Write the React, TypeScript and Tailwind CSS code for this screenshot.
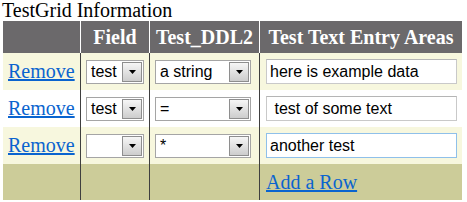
import React from 'react'

const serif = "font-['Liberation_Serif','Times_New_Roman',serif]"
const sans = "font-['Liberation_Sans',Arial,sans-serif]"

function FakeSelect({ value, width }: { value: string; width: string }) {
  return (
    <div className={`flex h-[24px] items-center border border-[#a5a5a5] bg-white p-[1px] ${width}`}>
      <span className={`flex-1 overflow-hidden whitespace-nowrap pl-[3px] text-[16px] leading-[20px] text-black ${sans}`}>
        {value}
      </span>
      <span className="flex h-full w-[20px] items-center justify-center border border-[#8e8e8e] bg-gradient-to-b from-[#f6f6f6] to-[#cdcdcd]">
        <svg width="7" height="4" viewBox="0 0 7 4">
          <path d="M0 0h7L3.5 4z" fill="#000" />
        </svg>
      </span>
    </div>
  )
}

function TextBox({ value, focused }: { value: string; focused?: boolean }) {
  return (
    <input
      readOnly
      value={value}
      className={`h-[25px] w-[191px] border bg-white pl-[3px] text-[16px] text-black outline-none ${sans} ${
        focused ? 'border-[#8fc0ea]' : 'border-[#c9c9c9] border-t-[#b5b5b5]'
      }`}
    />
  )
}

const rows = [
  { field: 'test', ddl: 'a string', text: 'here is example data', bg: 'bg-[#f7f7de]' },
  { field: 'test', ddl: '=', text: ' test of some text', bg: 'bg-white' },
  { field: '', ddl: '*', text: 'another test', bg: 'bg-[#f7f7de]', focused: true },
]

export default function App() {
  return (
    <div className={`w-[467px] h-[202px] bg-white ${serif}`}>
      <div className="h-[21px] pl-[2px] text-[20px] leading-[21px] text-black">TestGrid Information</div>
      <div className="ml-[3px] w-[459px]">
        <div className="flex h-[32px] bg-[#6b696b] text-[20px] font-bold text-white">
          <div className="w-[78px] border-r border-white" />
          <div className="flex w-[69px] items-center justify-center border-r border-white">Field</div>
          <div className="flex w-[110px] items-center justify-center border-r border-white">Test_DDL2</div>
          <div className="flex flex-1 items-center justify-center">Test Text Entry Areas</div>
        </div>
        {rows.map((r, i) => (
          <div key={i} className={`flex h-[37px] ${r.bg} text-[20px]`}>
            <div className="flex w-[78px] items-center border-r border-[#3f3f3f] pl-[5px] pb-[2px]">
              <a href="#" className="text-[#0a64cf] underline">Remove</a>
            </div>
            <div className="flex w-[69px] items-center border-r border-[#3f3f3f] pl-[5px]">
              <FakeSelect value={r.field} width="w-[58px]" />
            </div>
            <div className="flex w-[110px] items-center border-r border-[#3f3f3f] pl-[5px]">
              <FakeSelect value={r.ddl} width="w-[96px]" />
            </div>
            <div className="flex flex-1 items-center pl-[6px]">
              <TextBox value={r.text} focused={r.focused} />
            </div>
          </div>
        ))}
        <div className="flex h-[36px] bg-[#cccc99] text-[20px]">
          <div className="w-[78px] border-r border-[#3f3f3f]" />
          <div className="w-[69px] border-r border-[#3f3f3f]" />
          <div className="w-[110px] border-r border-[#3f3f3f]" />
          <div className="flex flex-1 items-center pl-[6px]">
            <a href="#" className="text-[#0a64cf] underline">Add a Row</a>
          </div>
        </div>
      </div>
    </div>
  )
}
